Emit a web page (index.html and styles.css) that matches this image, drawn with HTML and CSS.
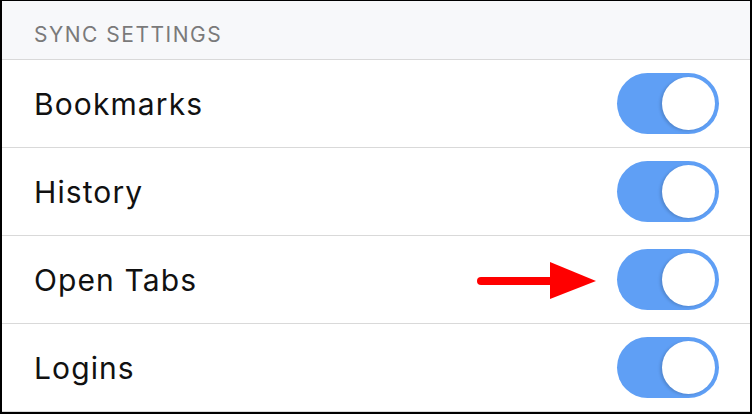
FILE: index.html
```html
<!DOCTYPE html>
<html lang="en">
<head>
    <meta charset="UTF-8">
    <meta name="viewport" content="width=device-width, initial-scale=1.0">
    <title>Sync Settings</title>
    <link rel="stylesheet" href="styles.css">
</head>
<body>
    <div class="panel">
        <div class="section-header">SYNC SETTINGS</div>
        <div class="row">
            <span class="label">Bookmarks</span>
            <span class="toggle on"><span class="knob"></span></span>
        </div>
        <div class="row">
            <span class="label">History</span>
            <span class="toggle on"><span class="knob"></span></span>
        </div>
        <div class="row">
            <span class="label">Open Tabs</span>
            <span class="arrow">
                <svg width="122" height="38" viewBox="0 0 122 38">
                    <line x1="4" y1="19" x2="76" y2="19" stroke="#ff0000" stroke-width="8" stroke-linecap="round"/>
                    <polygon points="73,0 119,19 73,37" fill="#ff0000"/>
                </svg>
            </span>
            <span class="toggle on"><span class="knob"></span></span>
        </div>
        <div class="row">
            <span class="label">Logins</span>
            <span class="toggle on"><span class="knob"></span></span>
        </div>
    </div>
</body>
</html>
```

FILE: styles.css
```css
body {
    margin: 0;
    font-family: Inter, "Liberation Sans", sans-serif;
    background-color: #fff;
}
.panel {
    width: 752px;
    height: 414px;
    box-sizing: border-box;
    border: 2px solid #000;
    border-top-width: 1px;
    overflow: hidden;
}
.section-header {
    height: 59px;
    box-sizing: border-box;
    padding-left: 32px;
    display: flex;
    align-items: center;
    padding-top: 8px;
    background-color: #f7f8fa;
    border-bottom: 1px solid #d9d9d9;
    color: #7a7a7a;
    font-size: 21px;
    letter-spacing: 1.5px;
}
.row {
    height: 88px;
    box-sizing: border-box;
    display: flex;
    align-items: center;
    padding-left: 32px;
    padding-right: 31px;
    border-bottom: 1px solid #d9d9d9;
}
.label {
    flex: 1;
    font-size: 30px;
    letter-spacing: 1.1px;
    color: #111;
}
.arrow {
    display: flex;
    margin-right: 18px;
    margin-top: 2px;
}
.toggle {
    position: relative;
    width: 102px;
    height: 61px;
    border-radius: 31px;
    background-color: #5f9ff5;
}
.knob {
    position: absolute;
    top: 4px;
    right: 4px;
    width: 53px;
    height: 53px;
    border-radius: 50%;
    background-color: #fff;
    box-shadow: -2px 1px 3px rgba(0, 0, 0, 0.15);
}
```
